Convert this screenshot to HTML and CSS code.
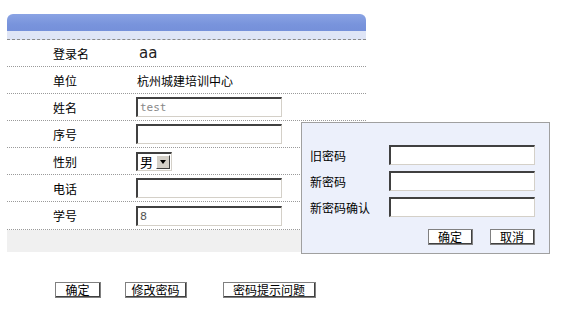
FILE: index.html
```
<!DOCTYPE html>
<html lang="zh-CN">
<head>
    <meta charset="UTF-8">
    <title>用户信息</title>
    <link rel="stylesheet" href="styles.css">
</head>
<body>
    <div class="page">
        <div class="panel">
            <div class="panel-head"></div>
            <div class="panel-strip"></div>
            <div class="row">
                <span class="label">登录名</span>
                <span class="value login">aa</span>
            </div>
            <div class="row">
                <span class="label">单位</span>
                <span class="value">杭州城建培训中心</span>
            </div>
            <div class="row">
                <span class="label">姓名</span>
                <input type="text" class="field grey" value="test">
            </div>
            <div class="row">
                <span class="label">序号</span>
                <input type="text" class="field">
            </div>
            <div class="row">
                <span class="label">性别</span>
                <span class="select">
                    <span class="select-text">男</span>
                    <span class="select-arrow"></span>
                </span>
            </div>
            <div class="row">
                <span class="label">电话</span>
                <input type="text" class="field">
            </div>
            <div class="row last">
                <span class="label">学号</span>
                <input type="text" class="field num" value="8">
            </div>
            <div class="panel-foot"></div>
        </div>

        <div class="actions">
            <button class="btn btn-ok">确定</button>
            <button class="btn btn-pwd">修改密码</button>
            <button class="btn btn-hint">密码提示问题</button>
        </div>

        <div class="popup">
            <div class="popup-row">
                <span class="popup-label">旧密码</span>
                <input type="password" class="field">
            </div>
            <div class="popup-row">
                <span class="popup-label">新密码</span>
                <input type="password" class="field">
            </div>
            <div class="popup-row">
                <span class="popup-label">新密码确认</span>
                <input type="password" class="field">
            </div>
            <div class="popup-buttons">
                <button class="btn">确定</button>
                <button class="btn">取消</button>
            </div>
        </div>
    </div>
</body>
</html>
```

FILE: styles.css
```
body {
    margin: 0;
    padding: 0;
    background-color: #fff;
    font-family: "Liberation Sans", "Noto Sans CJK SC", sans-serif;
    font-size: 12px;
    color: #000;
}

.page {
    position: relative;
    width: 568px;
    height: 310px;
    padding: 14px 0 0 7px;
    box-sizing: border-box;
}

.panel {
    width: 359px;
}

.panel-head {
    height: 17px;
    border-radius: 6px 6px 0 0;
    background: linear-gradient(#8aa3e4, #7994dc 60%, #7590da);
}

.panel-strip {
    height: 8px;
    background-color: #dfe5f6;
    border-bottom: 1px dashed #8a8a8a;
}

.row {
    display: flex;
    align-items: center;
    height: 26px;
    border-bottom: 1px dotted #9a9a9a;
}

.label {
    width: 83px;
    padding-left: 46px;
}

.value {
    padding-left: 1px;
}

.login {
    font-size: 15px;
    color: #222;
    font-family: "DejaVu Sans", sans-serif;
    padding-left: 3px;
}

.field {
    width: 146px;
    height: 20px;
    box-sizing: border-box;
    margin: 0;
    padding: 1px 2px;
    border-style: solid;
    border-width: 2px 1px 1px 2px;
    border-color: #404040 #d4d0c8 #d4d0c8 #404040;
    background: #fff;
    font-family: "DejaVu Sans Mono", monospace;
    font-size: 11px;
    color: #000;
}

.grey {
    color: #888;
}

.num {
    color: #555;
    font-family: "DejaVu Sans", sans-serif;
}

.select {
    display: flex;
    align-items: center;
    height: 19px;
    box-sizing: border-box;
    border-style: solid;
    border-width: 2px 1px 1px 2px;
    border-color: #404040 #d4d0c8 #d4d0c8 #404040;
    background: #fff;
}

.select-text {
    padding: 0 3px 0 2px;
    font-size: 13px;
}

.select-arrow {
    position: relative;
    width: 14px;
    height: 14px;
    margin-right: 1px;
    box-sizing: border-box;
    background: #d4d0c8;
    border-style: solid;
    border-width: 1px;
    border-color: #fff #404040 #404040 #fff;
}

.select-arrow::after {
    content: "";
    position: absolute;
    left: 3px;
    top: 4px;
    border-left: 3px solid transparent;
    border-right: 3px solid transparent;
    border-top: 4px solid #000;
}

.row.last {
    height: 27px;
}

.panel-foot {
    height: 22px;
    background-color: #f0f0f0;
}

.actions {
    display: flex;
    padding: 30px 0 0 48px;
}

.btn {
    height: 16px;
    margin: 0;
    padding: 0;
    box-sizing: border-box;
    background-color: #fff;
    border-style: solid;
    border-width: 1px 2px 2px 1px;
    border-color: #fff #404040 #404040 #fff;
    outline: 1px solid #808080;
    outline-offset: -1px;
    font-family: "Noto Sans CJK SC", sans-serif;
    font-size: 12px;
    line-height: 12px;
    color: #000;
}

.btn-ok {
    width: 46px;
}

.btn-pwd {
    width: 62px;
    margin-left: 24px;
}

.btn-hint {
    width: 93px;
    margin-left: 36px;
}

.popup {
    position: absolute;
    left: 301px;
    top: 122px;
    width: 249px;
    height: 132px;
    box-sizing: border-box;
    padding: 22px 14px 0 8px;
    background-color: #ecf0fb;
    border: 1px solid #a0a0a0;
}

.popup-row {
    display: flex;
    align-items: center;
    height: 20px;
    margin-bottom: 6px;
}

.popup-label {
    width: 79px;
}

.popup-buttons {
    display: flex;
    justify-content: flex-end;
    gap: 17px;
    padding-top: 6px;
}

.popup-buttons .btn {
    width: 45px;
    height: 16px;
}
```
